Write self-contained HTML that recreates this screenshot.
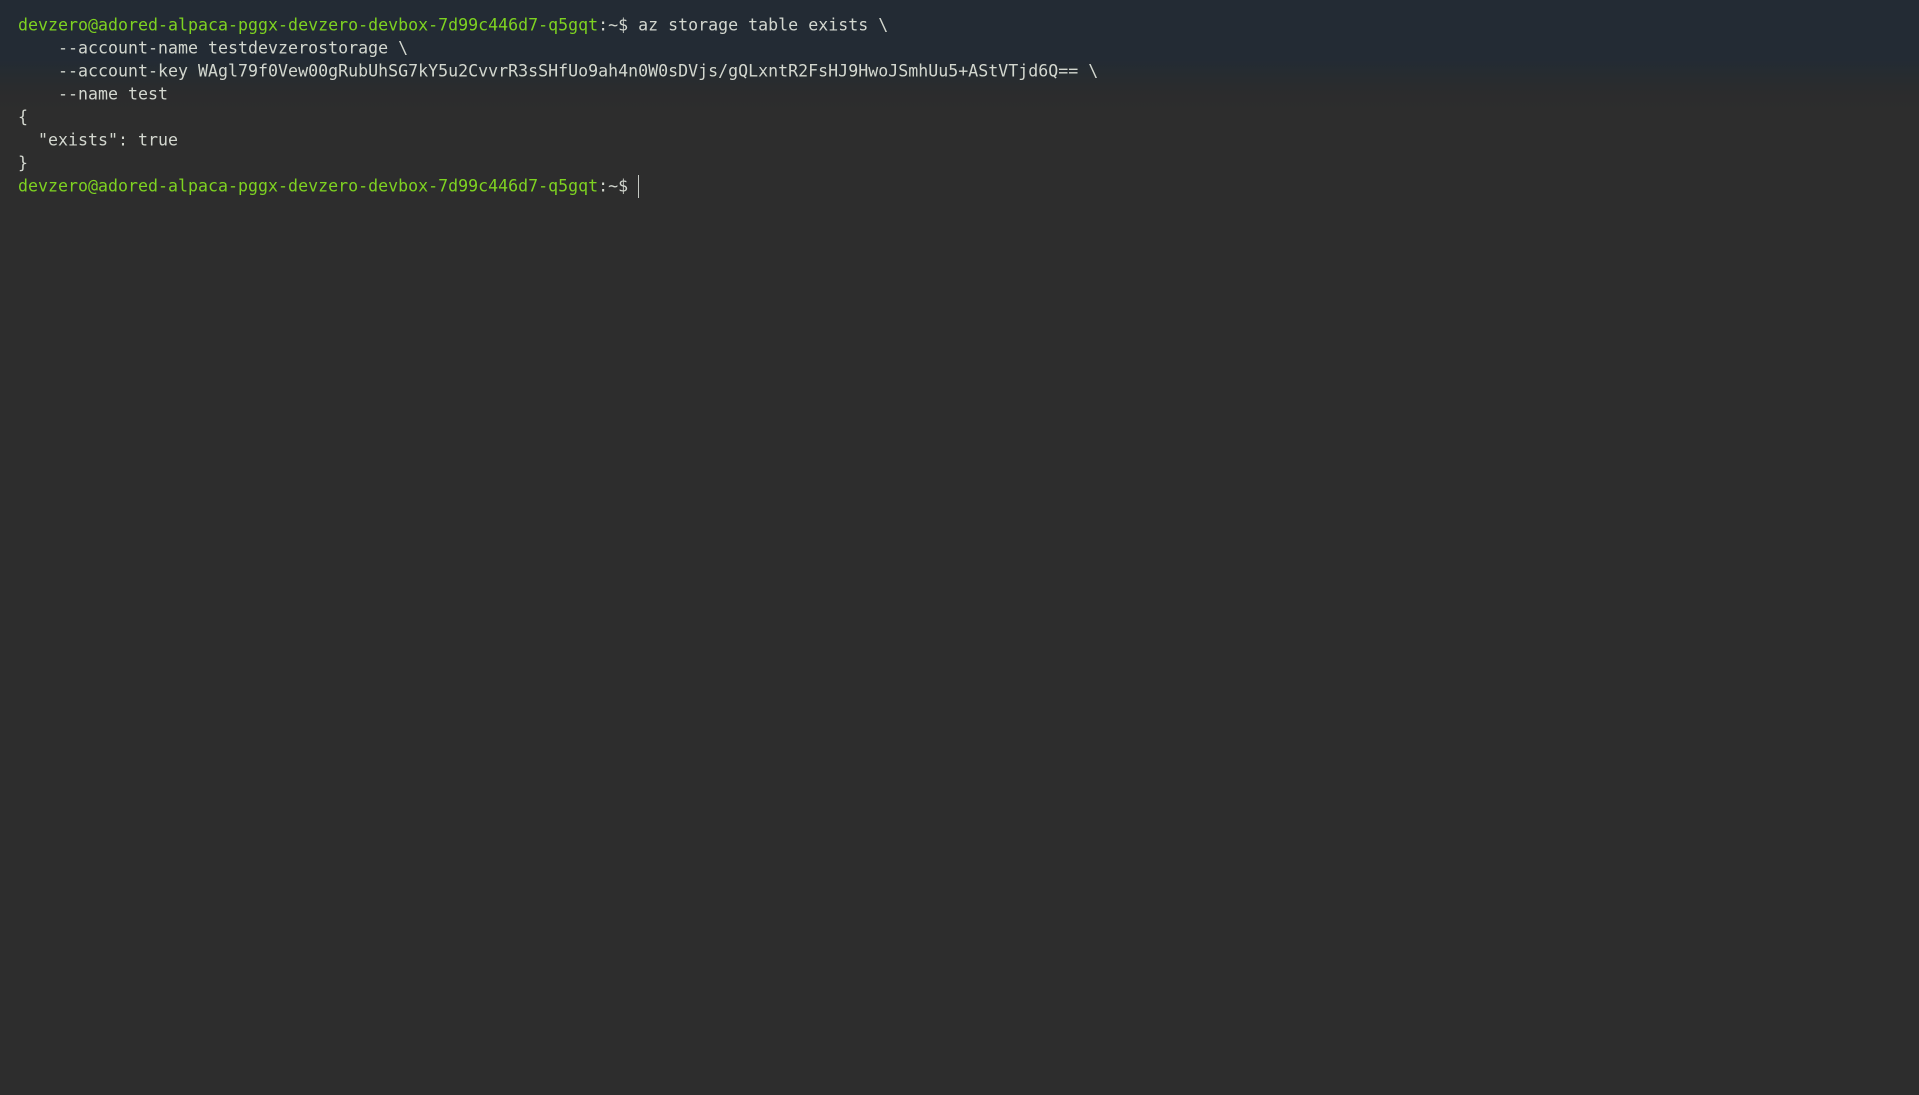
<!DOCTYPE html>
<html>
<head>
<meta charset="utf-8">
<style>
html,body{margin:0;padding:0;width:1919px;height:1095px;overflow:hidden;background:#2d2d2d}
body{position:relative;background:linear-gradient(180deg,#232b34 0,#232b34 60px,#272c30 76px,#2b2c2d 92px,#2d2d2d 110px,#2d2d2d 100%)}
pre{position:absolute;left:18px;top:14px;margin:0;font-family:"DejaVu Sans Mono","Liberation Mono",monospace;font-size:16.6px;letter-spacing:.012px;line-height:23px;color:#d3d7cf;white-space:pre;transform:translateY(-.5px)}
.g{color:#7ed321}
#c{position:absolute;left:638px;top:175px;width:1px;height:23px;background:#c4c8c2}
</style>
</head>
<body>
<pre><span class="g">devzero@adored-alpaca-pggx-devzero-devbox-7d99c446d7-q5gqt</span>:~$ az storage table exists \
    --account-name testdevzerostorage \
    --account-key WAgl79f0Vew00gRubUhSG7kY5u2CvvrR3sSHfUo9ah4n0W0sDVjs/gQLxntR2FsHJ9HwoJSmhUu5+AStVTjd6Q== \
    --name test
{
  "exists": true
}
<span class="g">devzero@adored-alpaca-pggx-devzero-devbox-7d99c446d7-q5gqt</span>:~$ </pre>
<div id="c"></div>
</body>
</html>
